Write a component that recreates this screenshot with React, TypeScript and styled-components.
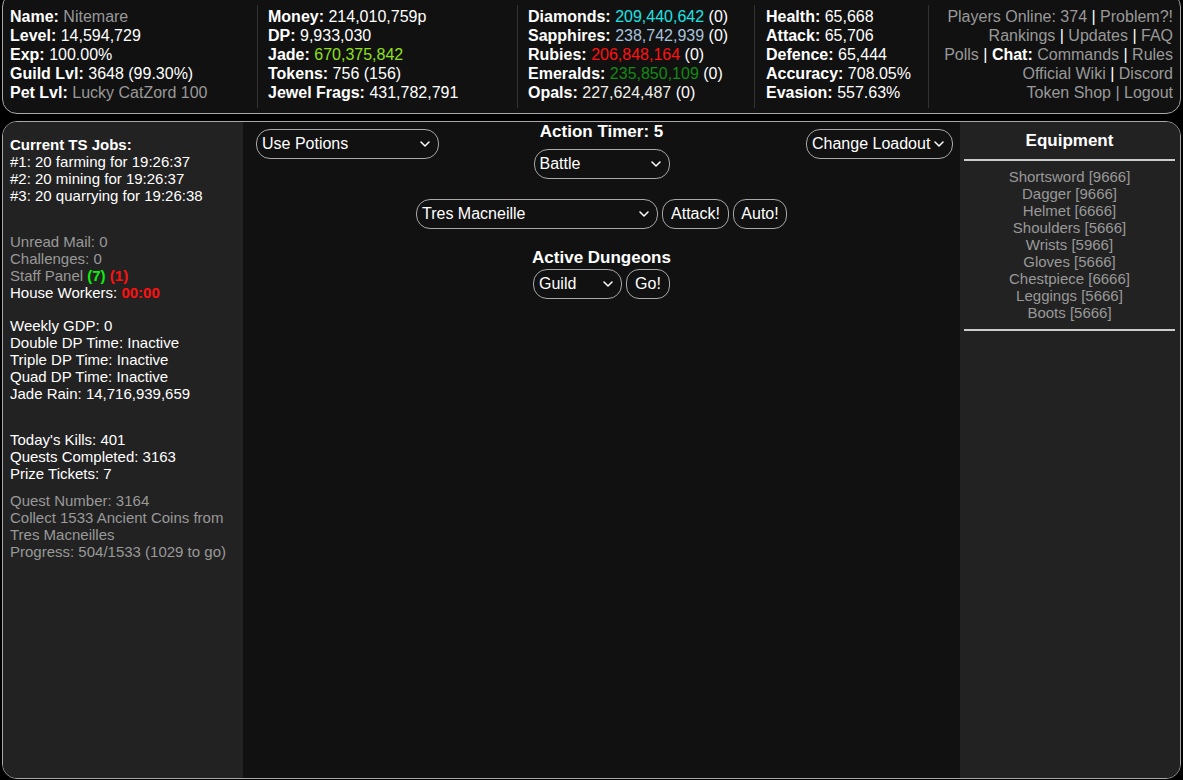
import React from 'react';
import styled, { createGlobalStyle } from 'styled-components';

const GlobalStyle = createGlobalStyle`
  html, body {
    margin: 0;
    padding: 0;
    background: #000;
    overflow: hidden;
  }
  body {
    font-family: "Liberation Sans", Arial, sans-serif;
    color: #fff;
  }
`;

const colors = {
  gray: '#999',
  border: '#a8a8a8',
  jade: '#8fe01a',
  diamond: '#1ee3e3',
  sapphire: '#a9c2dc',
  ruby: '#ff1111',
  emerald: '#138a13',
  opal: '#efefe8',
  green: '#11ee11',
  red: '#ff1111',
};

interface StatProps {
  label: string;
  value: string;
  color?: string;
  extra?: string;
}

const Stat = ({ label, value, color, extra }: StatProps) => (
  <StatLine>
    <b>{label}:</b> <Value $color={color}>{value}</Value>
    {extra && ` ${extra}`}
  </StatLine>
);

const Pipe = ({ dim }: { dim?: boolean }) => <Sep $dim={dim}> | </Sep>;

const Chevron = () => (
  <svg width="10" height="6" viewBox="0 0 10 6">
    <polyline points="1,1 5,5 9,1" fill="none" stroke="#fff" strokeWidth="1.5" strokeLinecap="round" strokeLinejoin="round" />
  </svg>
);

const Picker = ({ label, width }: { label: string; width: number }) => (
  <PickerBox $width={width}>
    <span>{label}</span>
    <Chevron />
  </PickerBox>
);

const equipment = [
  'Shortsword [9666]',
  'Dagger [9666]',
  'Helmet [6666]',
  'Shoulders [5666]',
  'Wrists [5966]',
  'Gloves [5666]',
  'Chestpiece [6666]',
  'Leggings [5666]',
  'Boots [5666]',
];

const App = () => {
  return (
    <>
      <GlobalStyle />
      <Page>
        <TopBar>
          <Cell>
            <Stat label="Name" value="Nitemare" color={colors.gray} />
            <Stat label="Level" value="14,594,729" />
            <Stat label="Exp" value="100.00%" />
            <Stat label="Guild Lvl" value="3648 (99.30%)" />
            <Stat label="Pet Lvl" value="Lucky CatZord 100" color={colors.gray} />
          </Cell>
          <Cell $divided>
            <Stat label="Money" value="214,010,759p" />
            <Stat label="DP" value="9,933,030" />
            <Stat label="Jade" value="670,375,842" color={colors.jade} />
            <Stat label="Tokens" value="756 (156)" />
            <Stat label="Jewel Frags" value="431,782,791" />
          </Cell>
          <Cell $divided>
            <Stat label="Diamonds" value="209,440,642" color={colors.diamond} extra="(0)" />
            <Stat label="Sapphires" value="238,742,939" color={colors.sapphire} extra="(0)" />
            <Stat label="Rubies" value="206,848,164" color={colors.ruby} extra="(0)" />
            <Stat label="Emeralds" value="235,850,109" color={colors.emerald} extra="(0)" />
            <Stat label="Opals" value="227,624,487" color={colors.opal} extra="(0)" />
          </Cell>
          <Cell $divided $pad={11}>
            <Stat label="Health" value="65,668" />
            <Stat label="Attack" value="65,706" />
            <Stat label="Defence" value="65,444" />
            <Stat label="Accuracy" value="708.05%" />
            <Stat label="Evasion" value="557.63%" />
          </Cell>
          <LinkCell>
            <StatLine>
              <Link>Players Online: 374</Link>
              <Pipe />
              <Link>Problem?!</Link>
            </StatLine>
            <StatLine>
              <Link>Rankings</Link>
              <Pipe />
              <Link>Updates</Link>
              <Pipe />
              <Link>FAQ</Link>
            </StatLine>
            <StatLine>
              <Link>Polls</Link>
              <Pipe />
              <b>Chat:</b> <Link>Commands</Link>
              <Pipe />
              <Link>Rules</Link>
            </StatLine>
            <StatLine>
              <Link>Official Wiki</Link>
              <Pipe />
              <Link>Discord</Link>
            </StatLine>
            <StatLine>
              <Link>Token Shop</Link>
              <Pipe dim />
              <Link>Logout</Link>
            </StatLine>
          </LinkCell>
        </TopBar>

        <Main>
          <SideBar>
            <Group>
              <b>Current TS Jobs:</b>
              <div>#1: 20 farming for 19:26:37</div>
              <div>#2: 20 mining for 19:26:37</div>
              <div>#3: 20 quarrying for 19:26:38</div>
            </Group>
            <Group $gap={29}>
              <Muted>Unread Mail: 0</Muted>
              <Muted>Challenges: 0</Muted>
              <Muted>
                Staff Panel <Flag $color={colors.green}>(7)</Flag> <Flag $color={colors.red}>(1)</Flag>
              </Muted>
              <div>
                House Workers: <Flag $color={colors.red}>00:00</Flag>
              </div>
            </Group>
            <Group $gap={16}>
              <div>Weekly GDP: 0</div>
              <div>Double DP Time: Inactive</div>
              <div>Triple DP Time: Inactive</div>
              <div>Quad DP Time: Inactive</div>
              <div>Jade Rain: 14,716,939,659</div>
            </Group>
            <Group $gap={29}>
              <div>Today's Kills: 401</div>
              <div>Quests Completed: 3163</div>
              <div>Prize Tickets: 7</div>
            </Group>
            <Group $gap={10}>
              <Muted>Quest Number: 3164</Muted>
              <Muted>Collect 1533 Ancient Coins from Tres Macneilles</Muted>
              <Muted>Progress: 504/1533 (1029 to go)</Muted>
            </Group>
          </SideBar>

          <Center>
            <TopRow>
              <Side>
                <Picker label="Use Potions" width={183} />
              </Side>
              <Stack>
                <Heading>Action Timer: 5</Heading>
                <Picker label="Battle" width={136} />
              </Stack>
              <Side $end>
                <Picker label="Change Loadout" width={147} />
              </Side>
            </TopRow>
            <ActionRow $gap={20}>
              <Picker label="Tres Macneille" width={242} />
              <Button $width={67}>Attack!</Button>
              <Button $width={54}>Auto!</Button>
            </ActionRow>
            <Heading $gap={19}>Active Dungeons</Heading>
            <ActionRow $gap={1}>
              <Picker label="Guild" width={89} />
              <Button $width={44}>Go!</Button>
            </ActionRow>
          </Center>

          <EquipColumn>
            <EquipTitle>Equipment</EquipTitle>
            <Rule />
            <EquipList>
              {equipment.map((item) => (
                <div key={item}>{item}</div>
              ))}
            </EquipList>
            <Rule />
          </EquipColumn>
        </Main>
      </Page>
    </>
  );
};

export default App;

const Page = styled.div`
  height: 100vh;
  box-sizing: border-box;
  padding: 0 2px 1px;
  display: flex;
  flex-direction: column;
`;

const TopBar = styled.div`
  margin-top: -8px;
  display: grid;
  grid-template-columns: 254px 260px 237px 174px 1fr;
  padding: 12px 0 5px;
  border: 1px solid ${colors.border};
  border-radius: 15px;
  background: #111;
  font-size: 16px;
  line-height: 19px;
`;

const Cell = styled.div<{ $divided?: boolean; $pad?: number }>`
  padding: 2px 0 6px ${(p) => (p.$pad ?? (p.$divided ? 10 : 7))}px;
  border-left: ${(p) => (p.$divided ? '1px solid #333' : 'none')};
  white-space: nowrap;
`;

const LinkCell = styled(Cell).attrs({ $divided: true })`
  padding: 2px 7px 6px 0;
  text-align: right;
`;

const StatLine = styled.div`
  white-space: nowrap;
`;

const Value = styled.span<{ $color?: string }>`
  color: ${(p) => p.$color ?? '#fff'};
`;

const Link = styled.span`
  color: ${colors.gray};
`;

const Sep = styled.span<{ $dim?: boolean }>`
  color: ${(p) => (p.$dim ? colors.gray : '#fff')};
  white-space: pre;
`;

const Main = styled.div`
  flex: 1;
  margin-top: 7px;
  display: grid;
  grid-template-columns: 240px 1fr 220px;
  border: 1px solid ${colors.border};
  border-radius: 15px;
  overflow: hidden;
  background: #111;
`;

const SideBar = styled.div`
  background: #222;
  padding: 14px 7px 0;
  font-size: 15px;
  line-height: 17px;
`;

const Group = styled.div<{ $gap?: number }>`
  margin-top: ${(p) => p.$gap ?? 0}px;
`;

const Muted = styled.div`
  color: ${colors.gray};
`;

const Flag = styled.b<{ $color: string }>`
  color: ${(p) => p.$color};
`;

const Center = styled.div`
  display: flex;
  flex-direction: column;
  align-items: center;
`;

const TopRow = styled.div`
  align-self: stretch;
  display: grid;
  grid-template-columns: 1fr auto 1fr;
  align-items: start;
  padding: 0 7px;
`;

const Side = styled.div<{ $end?: boolean }>`
  display: flex;
  justify-content: ${(p) => (p.$end ? 'flex-end' : 'flex-start')};
  margin-top: 7px;
  padding-left: ${(p) => (p.$end ? 0 : 6)}px;
`;

const Stack = styled.div`
  display: flex;
  flex-direction: column;
  align-items: center;
  gap: 7px;
`;

const Heading = styled.div<{ $gap?: number }>`
  margin-top: ${(p) => p.$gap ?? 0}px;
  font-size: 17px;
  line-height: 20px;
  font-weight: bold;
`;

const ActionRow = styled.div<{ $gap: number }>`
  margin-top: ${(p) => p.$gap}px;
  display: flex;
  gap: 4px;
`;

const PickerBox = styled.div<{ $width: number }>`
  width: ${(p) => p.$width}px;
  height: 30px;
  box-sizing: border-box;
  display: flex;
  align-items: center;
  justify-content: space-between;
  padding: 0 8px 0 5px;
  border: 1px solid ${colors.border};
  border-radius: 14px;
  background: #111;
  font-size: 16px;
  white-space: nowrap;

  svg {
    flex-shrink: 0;
    margin-left: 3px;
  }
`;

const Button = styled.div<{ $width: number }>`
  width: ${(p) => p.$width}px;
  height: 30px;
  box-sizing: border-box;
  display: flex;
  align-items: center;
  justify-content: center;
  border: 1px solid ${colors.border};
  border-radius: 13px;
  font-size: 16px;
`;

const EquipColumn = styled.div`
  background: #222;
  padding: 9px 5px 0 4px;
`;

const EquipTitle = styled.div`
  text-align: center;
  font-size: 17px;
  line-height: 20px;
  font-weight: bold;
`;

const Rule = styled.div`
  height: 2px;
  margin-top: 8px;
  background: #ccc;
`;

const EquipList = styled.div`
  margin-top: 7px;
  text-align: center;
  font-size: 15px;
  line-height: 17px;
  color: ${colors.gray};
`;
